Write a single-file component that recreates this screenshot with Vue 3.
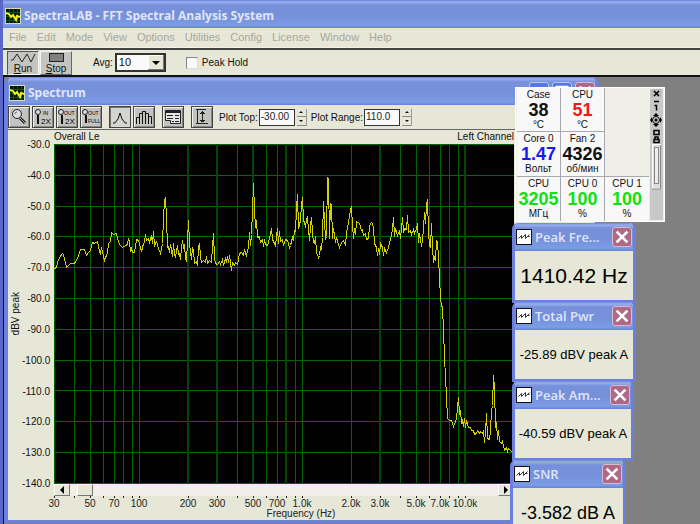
<script setup>
import { ref } from 'vue'

const menus = ['File', 'Edit', 'Mode', 'View', 'Options', 'Utilities', 'Config', 'License', 'Window', 'Help']
const average = ref('10')
const peakHold = ref(false)
const plotTop = ref('-30.00')
const plotRange = ref('110.0')

const levels = Array.from({ length: 12 }, (_, i) => (-30 - i * 10).toFixed(1))
const rows = Array.from({ length: 12 }, (_, i) => Math.round(i * 30.8) + 0.5)

const xOf = (f) => Math.round(85 + 163 * Math.log10(f / 100))
const freqs = [30, 40, 50, 60, 70, 80, 90, 100, 200, 300, 400, 500, 600, 700, 800, 900, 1000,
  2000, 3000, 4000, 5000, 6000, 7000, 8000, 9000, 10000]
const wide = [200, 300, 500, 800, 3000, 10000]
const freqLabels = [[30, '30'], [50, '50'], [70, '70'], [100, '100'], [200, '200'], [300, '300'], [500, '500'],
  [700, '700'], [1000, '1.0k'], [2000, '2.0k'], [3000, '3.0k'], [5000, '5.0k'], [7000, '7.0k'], [10000, '10.0k']]

const trace = `54,268 56,267 57,262 59,257 62,253 63,254 66,267 70,263 74,263 77,258 80,249 84,249 86,255 88,252 90,250
92,242 94,243 97,241 99,251 100,253 101,247 103,256 104,260 107,252 108,243 110,241 111,232 113,234 116,233 118,242 120,245 122,247
125,245 127,244 128,238 129,241 130,251 131,248 132,252 134,252 136,239 138,240 140,247 141,251 143,243 144,242 145,234 146,240 148,238 149,242
151,235 152,243 153,231 154,246 155,242 156,241 158,248 160,253 162,243 163,217 164,201 165,197 166,217 167,247 168,246 169,252
170,244 172,256 173,243 174,254 175,257 177,245 178,254 179,253 180,259 181,247 182,240 183,247 184,245 185,258 186,261 187,240 188,220
189,243 191,259 192,247 193,250 194,263 196,261 197,265 198,247 199,243 200,256 201,262 203,260 205,262 206,256 207,263 209,260 211,262
212,246 213,233 214,258 215,263 217,264 219,261 220,264 222,259 223,265 225,258 226,262 227,256 228,262 229,255 231,270 232,262
234,265 235,262 237,264 239,253 241,252 243,255 244,249 246,256 247,249 248,248 249,232 250,245 251,234 252,210 253,183 254,210 255,227 256,220
257,237 259,236 260,242 262,239 263,246 264,239 265,244 267,245 269,238 271,228 272,239 274,243 275,246 276,235 277,228 278,243 279,231
280,241 282,239 283,245 285,239 287,240 289,247 290,245 292,237 293,240 294,230 295,231 296,208 297,194 298,228 300,220 301,204 302,197
303,220 304,222 305,227 306,219 307,217 308,229 309,240 310,225 311,217 312,232 313,242 314,243 315,236 316,252 318,257 319,255
320,246 321,249 322,237 323,201 324,221 325,238 326,236 327,177 328,178 329,238 330,203 331,204 332,238 333,228 335,242 336,237 338,244 339,247
341,242 343,240 345,245 346,232 348,222 350,209 351,207 352,225 353,238 354,228 355,234 356,221 359,223 361,230 362,229 363,235 365,233
366,239 368,238 369,225 371,222 372,223 373,228 374,243 376,247 377,255 378,248 379,254 380,243 382,247 383,255 384,248 386,252 388,247
390,238 391,235 392,228 393,217 394,236 395,228 397,235 399,230 400,238 402,217 403,232 404,228 406,229 407,215 408,232 410,230 411,234
413,229 414,233 416,228 417,223 418,242 419,233 421,246 422,240 423,228 424,212 425,223 426,205 427,199 428,231 429,245 430,247 431,223
432,247 433,262 434,257 435,260 436,240 437,241 438,257 439,277 440,297 441,305 442,307 443,330 444,357 446,396 447,418 449,420 451,420
453,426 455,421 456,418 457,407 458,397 459,413 460,411 461,422 462,420 463,426 464,418 465,427 466,420 468,427 470,427 471,430 473,430
474,434 476,433 477,430 479,433 480,431 482,433 483,430 484,442 485,432 486,413 487,438 489,439 490,430 491,410 492,405 493,375 494,387 495,427
496,422 497,439 498,430 499,441 501,443 502,441 504,450 506,447 507,451 508,448 510,450 512,452`

const sensors = [
  { name: 'Case', value: '38', unit: '°C', tone: 'black' },
  { name: 'CPU', value: '51', unit: '°C', tone: 'red' },
  { empty: true },
  { name: 'Core 0', value: '1.47', unit: 'Вольт', tone: 'blue' },
  { name: 'Fan 2', value: '4326', unit: 'об/мин', tone: 'black' },
  { empty: true },
  { name: 'CPU', value: '3205', unit: 'МГц', tone: 'green' },
  { name: 'CPU 0', value: '100', unit: '%', tone: 'green' },
  { name: 'CPU 1', value: '100', unit: '%', tone: 'green' },
]

const readouts = [
  { id: 'freq', title: 'Peak Fre...', value: '1410.42 Hz', size: 'large' },
  { id: 'power', title: 'Total Pwr', value: '-25.89 dBV peak A', size: 'small' },
  { id: 'amp', title: 'Peak Am...', value: '-40.59 dBV peak A', size: 'small' },
  { id: 'snr', title: 'SNR', value: '-3.582 dB A', size: 'medium' },
]
</script>

<template>
  <main class="app">
    <header class="caption main-caption">
      <svg class="logo" viewBox="0 0 16 16"><rect width="16" height="16" fill="#d8d8c0" /><rect x="1" y="1" width="14" height="14" fill="#001800" /><path d="M4.500 1v14M8.500 1v14M12.500 1v14M1 4.500h14M1 8.500h14M1 12.500h14" stroke="#085808" /><path d="M1 5l3 1 2 3 2-2 3 5 1-4 3 1" fill="none" stroke="#f0f020" stroke-width="2" /></svg>
      <h1>SpectraLAB - FFT Spectral Analysis System</h1>
    </header>

    <nav class="menu">
      <button v-for="m in menus" :key="m" type="button">{{ m }}</button>
    </nav>

    <section class="runbar">
      <button type="button" class="run pressed">
        <svg viewBox="0 0 26 12"><path d="M1 8h2l4-6 5 8 5-8 4 8 4-8" fill="none" stroke="#222" /></svg>
        <span><u>R</u>un</span>
      </button>
      <button type="button" class="run">
        <svg viewBox="0 0 26 12"><rect x="6.500" y="1.500" width="14" height="8" fill="#808080" stroke="#222" /></svg>
        <span><u>S</u>top</span>
      </button>
      <label class="avg" for="avg">Avg:</label>
      <div class="combo">
        <select id="avg" v-model="average"><option>10</option><option>20</option></select>
        <svg viewBox="0 0 16 15"><rect width="16" height="15" fill="#e6e7d7" /><path d="M.5 14.500V.5h15" fill="none" stroke="#fff" /><path d="M0 14.500h15.500V0" fill="none" stroke="#777" /><path d="M4 6h8l-4 4z" /></svg>
      </div>
      <label class="hold"><input v-model="peakHold" type="checkbox">Peak Hold</label>
    </section>

    <section class="desktop">
      <article class="spectrum">
        <header class="caption">
          <svg class="logo" viewBox="0 0 16 16"><rect width="16" height="16" fill="#d8d8c0" /><rect x="1" y="1" width="14" height="14" fill="#001800" /><path d="M4.500 1v14M8.500 1v14M12.500 1v14M1 4.500h14M1 8.500h14M1 12.500h14" stroke="#085808" /><path d="M1 5l3 1 2 3 2-2 3 5 1-4 3 1" fill="none" stroke="#f0f020" stroke-width="2" /></svg>
          <h2>Spectrum</h2>
          <div class="sys">
            <button type="button" aria-label="Minimize"><svg viewBox="0 0 20 20"><path d="M4 15h8" stroke="#fff" stroke-width="3" /></svg></button>
            <button type="button" aria-label="Maximize"><svg viewBox="0 0 20 20"><path d="M3 4.500h14M3.500 4v12h13V4" fill="none" stroke="#fff" stroke-width="3" /></svg></button>
            <button type="button" class="shut" aria-label="Close"><svg viewBox="0 0 20 20"><path d="M4 4l12 12M16 4L4 16" stroke="#fff" stroke-width="3" /></svg></button>
          </div>
        </header>

        <div class="tools">
          <button type="button" aria-label="Zoom"><svg viewBox="0 0 18 18"><circle cx="7" cy="6" r="4.500" fill="#ddd" stroke="#222" /><path d="M5 6a2 2 0 0 1 2-2" fill="none" stroke="#666" /><path d="M10 10l5 5" stroke="#222" stroke-width="3" /><path d="M10 10l5 5" stroke="#aaa" /></svg></button>
          <button type="button" aria-label="Zoom in 2X"><svg viewBox="0 0 18 18"><circle cx="4" cy="4" r="2.500" fill="#ddd" stroke="#222" /><path d="M4 7v9" stroke="#111" stroke-width="2" /><text x="9" y="7" class="tiny">IN</text><text x="7" y="16" class="two">2X</text></svg></button>
          <button type="button" aria-label="Zoom out 2X"><svg viewBox="0 0 18 18"><circle cx="3" cy="4" r="2.500" fill="#ddd" stroke="#222" /><path d="M4 7v9" stroke="#111" stroke-width="2" /><text x="6" y="7" class="tiny">OUT</text><text x="7" y="16" class="two">2X</text></svg></button>
          <button type="button" class="end" aria-label="Zoom out full"><svg viewBox="0 0 18 18"><circle cx="3" cy="4" r="2.500" fill="#ddd" stroke="#222" /><path d="M4 7v8" stroke="#111" stroke-width="2" /><text x="6" y="7" class="tiny">OUT</text><text x="6" y="15" class="tiny">FULL</text></svg></button>
          <button type="button" class="pressed" aria-label="Line plot"><svg viewBox="0 0 18 18"><path d="M2 15h2l3-4 2-6 2 6 3 4h2" fill="none" stroke="#111" /></svg></button>
          <button type="button" class="end" aria-label="Bar plot"><svg viewBox="0 0 18 18"><path d="M1.500 16V9.500h3V16M4.500 10V5.500h3V16M7.500 6V3.500h3V16M10.500 5.500h3V16M13.500 8.500h3V16" fill="none" stroke="#111" /></svg></button>
          <button type="button" class="end" aria-label="Settings"><svg viewBox="0 0 18 18"><path d="M1.500 2.500h15v13H6.500v-3h-5z" fill="#e6e6e6" stroke="#222" /><path d="M2 4h14" stroke="#222" stroke-width="2" /><path d="M3 7.500h6M11 7.500h4M3 10.500h6M11 10.500h4M8 13.500h2M11 13.500h4" stroke="#222" /></svg></button>
          <button type="button" aria-label="Fit range"><svg viewBox="0 0 18 18"><path d="M3 1.500h10M3 15.500h12M9.500 3v11M7 5.500h5M7 12.500h5M8 4.500h3M8 13.500h3M4.500 2v13" fill="none" stroke="#222" /></svg></button>
          <label for="ptop">Plot Top:</label>
          <input id="ptop" v-model="plotTop" type="text">
          <div class="spin"><button type="button" aria-label="Raise plot top"><i /></button><button type="button" aria-label="Lower plot top"><i class="down" /></button></div>
          <label for="prange">Plot Range:</label>
          <input id="prange" v-model="plotRange" type="text">
          <div class="spin"><button type="button" aria-label="Increase plot range"><i /></button><button type="button" aria-label="Decrease plot range"><i class="down" /></button></div>
        </div>

        <div class="chart">
          <div class="heads"><span>Overall Le</span><span>Left Channel</span></div>
          <div class="unit"><span>dBV peak</span></div>
          <div class="levels"><span v-for="l in levels" :key="l">{{ l }}</span></div>
          <svg class="plot" viewBox="0 0 460 340">
            <rect width="460" height="340" fill="#000" />
            <path v-for="y in rows" :key="y" :d="`M0 ${y}H460`" stroke="#006a00" />
            <path v-for="f in freqs" :key="f" :d="`M${xOf(f) + (wide.includes(f) ? 0 : 0.5)} 0V340`" :stroke="wide.includes(f) ? '#004800' : '#006400'" :stroke-width="wide.includes(f) ? 2 : 1" />
            <polyline transform="translate(-53.500 -143.500)" :points="trace" fill="none" stroke="#d2d200" stroke-width="1" shape-rendering="crispEdges" />
          </svg>
          <div class="scroll">
            <button type="button" aria-label="Scroll left"><svg viewBox="0 0 8 8"><path d="M6 0v8L2 4z" /></svg></button>
            <button type="button" class="thumb" aria-label="Scroll position" />
            <button type="button" class="right" aria-label="Scroll right"><svg viewBox="0 0 8 8"><path d="M2 0v8l4-4z" /></svg></button>
          </div>
          <svg class="axis" viewBox="0 0 460 24">
            <path v-for="f in freqs" :key="f" :d="`M${xOf(f) + 0.5} 0v2`" stroke="#222" />
            <text v-for="[f, t] in freqLabels" :key="t" :x="xOf(f)" y="11" text-anchor="middle">{{ t }}</text>
            <text x="247" y="21" text-anchor="middle">Frequency (Hz)</text>
          </svg>
        </div>
      </article>
    </section>

    <aside class="monitor">
      <div class="cells">
        <div v-for="(s, i) in sensors" :key="i" class="cell" :class="{ empty: s.empty }">
          <template v-if="!s.empty">
            <span>{{ s.name }}</span><b :class="s.tone">{{ s.value }}</b><span>{{ s.unit }}</span>
          </template>
        </div>
      </div>
      <div class="strip">
        <svg viewBox="0 0 12 130"><rect x="1" width="10" height="8" fill="#bbb" /><path d="M4 2l5 5M9 2L4 7" stroke="#000" stroke-width="1.500" /><path d="M4 12.500h5M4.500 16.500h2v5" fill="none" stroke="#000" stroke-width="1.500" /><circle cx="6" cy="31" r="3.500" fill="none" stroke="#000" /><circle cx="6" cy="31" r="1.500" /><path d="M6 24l3 3H3zM6 38l3-3H3zM0 31l2-3v6zM12 31l-2-3v6z" /><path d="M4 41.500h5v4H4zM4 50.500h5v3H4zM5 50v-2h3v2" fill="none" stroke="#000" stroke-width="1.500" /><rect x="2.500" y="55.500" width="8" height="44" fill="#ddd" stroke="#fff" /><rect x="4.500" y="58.500" width="4" height="36" fill="#eee" stroke="#888" /><path d="M10.500 56v44H2" fill="none" stroke="#888" /></svg>
      </div>
    </aside>

    <article v-for="r in readouts" :key="r.id" class="readout" :class="r.id">
      <header class="caption">
        <svg class="wave" viewBox="0 0 16 16"><rect x=".5" y=".5" width="15" height="15" fill="#fff" stroke="#111" /><path d="M2.500 9.500l3-3v3l4-4v4l4-4M11.500 7.500h2" fill="none" stroke="#333" /></svg>
        <h2>{{ r.title }}</h2>
        <button type="button" class="shut" aria-label="Close"><svg viewBox="0 0 20 20"><path d="M4 4l12 12M16 4L4 16" stroke="#fff" stroke-width="3" /></svg></button>
      </header>
      <output :class="r.size">{{ r.value }}</output>
    </article>
  </main>
</template>

<style>
body { margin: 0; background: #808080; }
</style>

<style scoped>
* { box-sizing: border-box; }
.app {
  position: relative;
  height: 100vh;
  overflow: hidden;
  display: flex;
  flex-direction: column;
  border-left: 3px solid #5a66c8;
  background: #e6e7d7;
  font: 10px/13px "Liberation Sans", Arial, sans-serif;
  color: #111;
}
button { padding: 0; margin: 0; border: 0; font: inherit; color: inherit; background: none; }
h1, h2 { margin: 0; font: 700 12px/16px "Open Sans", "Noto Sans", sans-serif; color: #e0e6f8; white-space: nowrap; }
.caption {
  display: flex;
  align-items: center;
  flex: none;
  height: 28px;
  background: linear-gradient(#6c82d8 0, #98b0ee 2px, #7690da 5px, #7690da 55%, #7b9ce6 90%, #6680d8 100%);
}
.main-caption { padding: 4px 0 0 2px; }
.logo { width: 16px; height: 16px; margin-right: 3px; }
.menu {
  display: flex;
  flex: none;
  gap: 10px;
  height: 20px;
  padding-left: 6px;
  border-bottom: 1px solid #f2f2e8;
  font-size: 11px;
}
.menu button { color: #a8a89c; }
.runbar {
  display: flex;
  align-items: center;
  flex: none;
  height: 29px;
  padding-left: 4px;
  border-top: 2px solid #444;
  border-bottom: 2px solid #111;
}
.run {
  display: flex;
  flex-direction: column;
  align-items: center;
  width: 32px;
  height: 24px;
  margin-right: 1px;
  line-height: 10px;
  background: #c4c4c0;
  border: 1px solid;
  border-color: #f4f4f4 #666 #666 #f4f4f4;
}
.run svg { width: 26px; height: 12px; flex: none; }
.pressed { border-color: #555 #f4f4f4 #f4f4f4 #555; }
.avg { margin: 0 2px 0 20px; }
.combo { display: grid; width: 51px; height: 19px; border: 2px solid #333; background: #fff; }
.combo select, .combo svg { grid-area: 1 / 1; }
.combo select {
  appearance: none;
  width: 100%;
  height: 15px;
  padding: 0 0 0 2px;
  border: 0;
  font: 11px/13px "Liberation Sans", Arial, sans-serif;
  color: #111;
  background: #fafafa;
}
.combo svg { width: 16px; height: 15px; justify-self: end; pointer-events: none; }
.hold { display: flex; align-items: center; gap: 4px; margin-left: 20px; }
.hold input {
  appearance: none;
  width: 12px;
  height: 12px;
  margin: 0;
  background: #fafafa;
  border: 1px solid;
  border-color: #888 #ddd #ddd #888;
}
.desktop { position: relative; flex: 1; background: #808080; border-left: 1px solid #111; }
.spectrum {
  position: absolute;
  left: 0;
  top: 0;
  width: 595px;
  border: solid #6a82dc;
  border-width: 0 4px 3px;
  border-radius: 7px 7px 0 0;
  background: #e6e7d7;
  overflow: hidden;
}
.spectrum .caption { padding: 3px 0 0 1px; }
.sys { display: flex; gap: 3px; align-self: flex-start; margin-left: auto; padding-top: 2px; }
.sys button { width: 20px; height: 20px; border: 1px solid #b8c6f4; border-radius: 3px; background: #5876e0; }
.shut, .sys .shut { flex: none; width: 20px; height: 20px; border: 1px solid #d8bccc; border-radius: 3px; background: #ae6888; }
.sys svg, .shut svg { display: block; width: 18px; height: 18px; }
.tools { display: flex; align-items: center; height: 25px; border-bottom: 1px solid #666; }
.tools > button {
  width: 22px;
  height: 22px;
  margin-right: 2px;
  border: 1px solid #444;
  background: #c2c2be;
  box-shadow: inset 1px 1px #f0f0f0, inset -1px -1px #888;
}
.tools > .pressed { background: #d4d4d0; box-shadow: inset 1px 1px #777; }
.tools > .end { margin-right: 7px; }
.tools > button svg { display: block; width: 18px; height: 18px; margin: 1px; }
.tiny { font: 5px "Liberation Sans", sans-serif; }
.two { font: 8px "Liberation Sans", sans-serif; }
.tools label { margin: 0 1px 0 4px; white-space: nowrap; }
.tools input { width: 36px; height: 17px; padding: 0 0 1px 1px; border: 1px solid #333; font: inherit; color: #222; background: #fafafa; }
.spin { display: grid; gap: 1px; width: 10px; height: 17px; margin-left: 2px; border: solid #999; border-width: 0 1px 1px 0; }
.spin button { display: grid; place-items: center; height: 8px; border-bottom: 1px solid #888; }
.spin i { border: 2px solid transparent; border-top: 0; border-bottom-color: #111; }
.spin .down { border-top: 2px solid #111; border-bottom: 0; }
.chart {
  display: grid;
  grid-template-columns: 14px 32px 460px;
  grid-template-rows: 14px 340px 12px 24px;
}
.heads { grid-column: 3; display: flex; justify-content: space-between; }
.unit { grid-area: 2 / 1; display: flex; align-items: center; justify-content: center; }
.unit span { writing-mode: vertical-rl; rotate: 180deg; }
.levels {
  grid-area: 2 / 2;
  display: flex;
  flex-direction: column;
  justify-content: space-between;
  margin: -6px 0;
  padding-right: 4px;
  text-align: right;
}
.plot { grid-area: 2 / 3; width: 460px; height: 340px; }
.scroll { grid-area: 3 / 3; display: flex; background: #f0f0e8; }
.scroll button { display: grid; place-items: center; width: 16px; height: 12px; background: #e6e7d7; border: 1px solid; border-color: #fff #777 #777 #fff; }
.scroll svg { width: 8px; height: 8px; }
.scroll .thumb { margin-left: 7px; }
.scroll .right { margin-left: auto; }
.axis { grid-area: 4 / 3; width: 460px; height: 24px; overflow: visible; fill: #222; }
.monitor {
  position: absolute;
  left: 512px;
  top: 87px;
  width: 150px;
  height: 135px;
  display: flex;
  border: 1px solid #fff;
  background: #efefe8;
}
.cells { display: grid; grid-template-columns: repeat(3, 44px); grid-template-rows: repeat(3, 1fr); padding-left: 1px; }
.cell {
  display: flex;
  flex-direction: column;
  align-items: center;
  justify-content: center;
  line-height: 12px;
  white-space: nowrap;
  background: #f8f8f8;
  border: solid #a8a8b0;
  border-width: 0 1px 1px 0;
}
.cell b { font: 700 18px/18px "Liberation Sans", Arial, sans-serif; }
.cell:nth-child(3n) { border-right: 0; }
.cell:nth-child(n + 7) { border-bottom: 0; }
.empty { background: #efefe8; }
.empty:nth-child(3) { border-bottom: 0; }
.black { color: #111; }
.red { color: #f01818; }
.blue { color: #1818f0; }
.green { color: #10e010; }
.strip { flex: 1; margin: 1px; background: #c8c8c8; }
.strip svg { display: block; width: 12px; height: 130px; }
.readout {
  position: absolute;
  left: 509px;
  width: 124px;
  height: 80px;
  display: flex;
  flex-direction: column;
  border: solid #6a80dc;
  border-width: 0 3px 3px;
  border-radius: 6px 6px 0 0;
  background: #e6e7d7;
  overflow: hidden;
}
.readout h2 { font-size: 13px; font-weight: 600; }
.readout .wave { flex: none; width: 16px; height: 16px; margin: 0 3px 0 1px; }
.readout .shut { margin-left: auto; margin-right: 1px; }
.freq { top: 223px; }
.power { top: 302px; }
.amp { top: 381px; width: 122px; }
.snr { top: 460px; left: 507px; width: 116px; }
output { flex: 1; display: grid; place-items: center; color: #000; white-space: nowrap; line-height: 32px; }
.large { font-size: 21px; }
.medium { font-size: 18px; }
.small { font-size: 13px; }
</style>
